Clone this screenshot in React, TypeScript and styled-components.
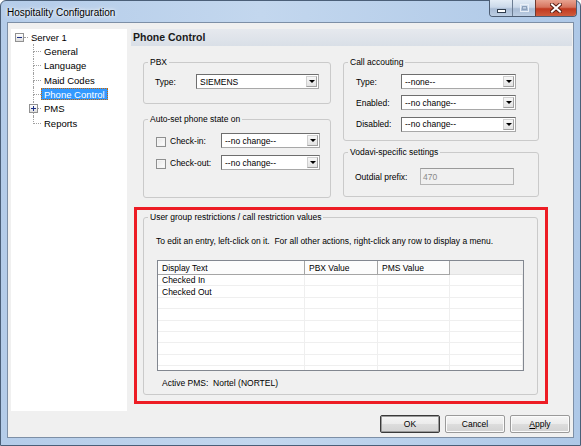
import { Fragment } from 'react';
import styled, { createGlobalStyle } from 'styled-components';

const GlobalStyle = createGlobalStyle`
  html, body {
    margin: 0;
    padding: 0;
    background: #fff;
  }
  body {
    font-family: "Liberation Sans", Arial, sans-serif;
    font-size: 8.5px;
    color: #000;
  }
`;

const Window = styled.div`
  width: 581px;
  height: 446px;
  box-sizing: border-box;
  display: flex;
  flex-direction: column;
  padding: 0 6px 7px 6px;
  border: 1px solid #4b5f78;
  border-radius: 6px 6px 0 0;
  background: linear-gradient(90deg, #b4cce9 0%, #c3d7ee 45%, #aec8e7 100%);
`;

const TitleBar = styled.div`
  height: 21px;
  display: flex;
  align-items: center;
  justify-content: space-between;
`;

const Title = styled.span`
  font-size: 10px;
  padding-top: 2px;
  text-shadow: 0 0 6px #fff, 0 0 3px #fff;
`;

const CaptionGroup = styled.div`
  align-self: flex-start;
  margin-top: -1px;
  margin-right: -3px;
  display: flex;
  height: 16px;
  border: 1px solid #4d5d73;
  border-top: none;
  border-radius: 0 0 4px 4px;
  overflow: hidden;
`;

const CaptionButton = styled.div<{ $close?: boolean; $width: number }>`
  width: ${(p) => p.$width}px;
  display: flex;
  align-items: center;
  justify-content: center;
  border-left: ${(p) => (p.$close ? '1px solid #6f3a30' : '1px solid #6c7d93')};
  background: ${(p) =>
    p.$close
      ? 'linear-gradient(180deg, #e8a390 0%, #d6745e 45%, #c13a20 55%, #cf5b3c 100%)'
      : 'linear-gradient(180deg, #e3ecf6 0%, #cbd9ea 45%, #a9bcd5 55%, #bccde2 100%)'};
  &:first-child {
    border-left: none;
  }
`;

const Client = styled.div`
  flex: 1;
  display: flex;
  flex-direction: column;
  gap: 4px;
  background: #f0f0f0;
  border: 1px solid #7d8fa6;
  padding: 6px 1px 4px 3px;
  min-height: 0;
`;

const Main = styled.div`
  flex: 1;
  display: flex;
  gap: 4px;
  min-height: 0;
`;

/* ---------- tree ---------- */

const Tree = styled.div`
  width: 116px;
  flex: none;
  background: #fff;
  padding-top: 1px;
  box-sizing: border-box;
  font-size: 9.5px;
`;

const TreeRow = styled.div<{ $indent: number }>`
  height: 14.33px;
  display: flex;
  align-items: stretch;
  padding-left: ${(p) => p.$indent}px;
`;

const Expander = styled.span<{ $over?: boolean }>`
  width: 9px;
  height: 9px;
  box-sizing: border-box;
  border: 1px solid #919191;
  background: linear-gradient(180deg, #fff, #dedede);
  display: flex;
  align-items: center;
  justify-content: center;
  align-self: center;
  flex: none;
  ${(p) =>
    p.$over &&
    `
    position: absolute;
    left: -4px;
    top: 50%;
    margin-top: -4.5px;
  `}
`;

const RootStub = styled.span`
  width: 4px;
  align-self: center;
  border-top: 1px dotted #a0a0a0;
`;

const Connector = styled.span`
  position: relative;
  width: 8px;
  flex: none;
  display: flex;
  flex-direction: column;
`;

const ConnectorHalf = styled.span<{ $line: boolean; $elbow?: boolean }>`
  flex: 1;
  border-left: ${(p) => (p.$line ? '1px dotted #a0a0a0' : '1px solid transparent')};
  border-bottom: ${(p) => (p.$elbow ? '1px dotted #a0a0a0' : 'none')};
`;

const TreeLabel = styled.span<{ $selected?: boolean }>`
  display: flex;
  align-items: center;
  align-self: center;
  height: 12px;
  padding: 0 2px;
  box-sizing: border-box;
  white-space: nowrap;
  border: 1px ${(p) => (p.$selected ? 'dotted #cc6600' : 'solid transparent')};
  color: ${(p) => (p.$selected ? '#fff' : '#000')};
  background: ${(p) => (p.$selected ? '#3399ff' : 'transparent')};
`;

const Minus = () => (
  <svg width="5" height="5" viewBox="0 0 5 5">
    <path d="M0 2.5h5" stroke="#1e3287" strokeWidth="1" />
  </svg>
);

const Plus = () => (
  <svg width="5" height="5" viewBox="0 0 5 5">
    <path d="M0 2.5h5M2.5 0v5" stroke="#1e3287" strokeWidth="1" />
  </svg>
);

const children = [
  { label: 'General' },
  { label: 'Language' },
  { label: 'Maid Codes' },
  { label: 'Phone Control', selected: true },
  { label: 'PMS', expandable: true },
  { label: 'Reports' },
];

/* ---------- right panel ---------- */

const Panel = styled.div`
  flex: 1;
  display: flex;
  flex-direction: column;
  min-width: 0;
`;

const PanelHeader = styled.div`
  height: 17px;
  line-height: 17px;
  padding-left: 2px;
  font-size: 10.5px;
  font-weight: bold;
  color: #1a1a1a;
  background: linear-gradient(180deg, #e6e9ee 0%, #d9dfe7 100%);
`;

const PanelBody = styled.div`
  padding-left: 3px;
  display: flex;
  flex-direction: column;
`;

const TopArea = styled.div`
  margin: 10.5px 0 0 9px;
  display: flex;
  gap: 12px;
`;

const Column = styled.div<{ $width: number; $gap: number }>`
  width: ${(p) => p.$width}px;
  display: flex;
  flex-direction: column;
  gap: ${(p) => p.$gap}px;
`;

const Group = styled.fieldset<{ $height: number }>`
  margin: 0;
  padding: 0;
  min-width: 0;
  height: ${(p) => p.$height}px;
  box-sizing: border-box;
  border: 1px solid #cacaca;
  border-radius: 3px;
`;

const Legend = styled.legend`
  margin-left: 4px;
  padding: 0 2px;
  line-height: 11px;
  font-size: 8.5px;
`;

const GroupBody = styled.div<{ $pad: string; $gap?: number }>`
  padding: ${(p) => p.$pad};
  display: flex;
  flex-direction: column;
  gap: ${(p) => p.$gap ?? 0}px;
`;

const FieldRow = styled.div<{ $height?: number }>`
  display: flex;
  align-items: center;
  height: ${(p) => p.$height ?? 15}px;
`;

const FieldLabel = styled.span<{ $width: number }>`
  width: ${(p) => p.$width}px;
  flex: none;
  white-space: nowrap;
`;

const CheckBox = styled.span`
  width: 10px;
  height: 10px;
  box-sizing: border-box;
  flex: none;
  margin: 2px 4px 0 0;
  border: 1px solid #8e8f8f;
  background: linear-gradient(135deg, #e6e6e6, #ffffff);
  box-shadow: inset 0 0 0 1px #f4f4f4;
`;

const ComboBox = styled.div<{ $width: number }>`
  width: ${(p) => p.$width}px;
  height: 15px;
  box-sizing: border-box;
  flex: none;
  display: flex;
  align-items: stretch;
  background: #fff;
  border: 1px solid #a8a8a8;
  border-top-color: #6e6e6e;
  border-left-color: #6e6e6e;
`;

const ComboText = styled.span`
  flex: 1;
  padding-left: 3px;
  display: flex;
  align-items: center;
  white-space: nowrap;
  overflow: hidden;
`;

const ComboButton = styled.span`
  width: 11px;
  margin: 1px;
  box-sizing: border-box;
  display: flex;
  align-items: center;
  justify-content: center;
  border: 1px solid #d0d0d0;
  border-right-color: #a0a0a0;
  border-bottom-color: #a0a0a0;
  background: linear-gradient(180deg, #f7f7f7, #e3e3e3);
`;

const TextField = styled.div<{ $width: number }>`
  width: ${(p) => p.$width}px;
  height: 17px;
  box-sizing: border-box;
  flex: none;
  padding-left: 2px;
  display: flex;
  align-items: center;
  color: #8a8a8a;
  background: #f0f0f0;
  border: 1px solid #b5b5b5;
  border-top-color: #9a9a9a;
`;

const Combo = ({ value, width }: { value: string; width: number }) => (
  <ComboBox $width={width}>
    <ComboText>{value}</ComboText>
    <ComboButton>
      <svg width="6" height="3" viewBox="0 0 6 3">
        <path d="M0 0h6L3 3z" fill="#000" />
      </svg>
    </ComboButton>
  </ComboBox>
);

const RedFrame = styled.div`
  margin-top: 9px;
  width: 414px;
  box-sizing: border-box;
  border: 3px solid #ed1c24;
  padding: 1.5px 7px 6px 6px;
`;

const Note = styled.div<{ $indent: number; $top: number }>`
  line-height: 11px;
  padding-left: ${(p) => p.$indent}px;
  margin-top: ${(p) => p.$top}px;
  white-space: nowrap;
`;

const ListView = styled.div`
  margin: 13.5px 0 0 13px;
  width: 367px;
  height: 111px;
  box-sizing: border-box;
  border: 1px solid #828790;
  background: #fff;
  overflow: hidden;
  display: grid;
  grid-template-columns: 147px 73px 72px 1fr;
  grid-template-rows: 14px;
  grid-auto-rows: 11.4px;
`;

const HeaderCell = styled.div<{ $filler?: boolean }>`
  box-sizing: border-box;
  padding-left: 4px;
  display: flex;
  align-items: center;
  white-space: nowrap;
  background: ${(p) => (p.$filler ? '#f0f0f0' : '#fcfcfc')};
  border-right: ${(p) => (p.$filler ? 'none' : '1px solid #a5a5a5')};
  border-bottom: 1px solid ${(p) => (p.$filler ? '#e2e2e2' : '#a5a5a5')};
`;

const Cell = styled.div`
  box-sizing: border-box;
  padding-left: 4px;
  display: flex;
  align-items: center;
  white-space: nowrap;
  border-right: 1px solid #efefef;
  border-bottom: 1px solid #efefef;
`;

const columns = ['Display Text', 'PBX Value', 'PMS Value'];
const rows = ['Checked In', 'Checked Out', '', '', '', '', '', '', ''];

/* ---------- buttons ---------- */

const ButtonBar = styled.div`
  height: 18px;
  display: flex;
  justify-content: flex-end;
  gap: 5px;
  padding-right: 2px;
`;

const Button = styled.div<{ $default?: boolean }>`
  width: 60px;
  height: 18px;
  box-sizing: border-box;
  display: flex;
  align-items: center;
  justify-content: center;
  border: 1px solid ${(p) => (p.$default ? '#3a3a3a' : '#9a9a9a')};
  border-radius: 2px;
  background: linear-gradient(180deg, #f6f6f6 0%, #ebebeb 50%, #dddddd 51%, #d2d2d2 100%);
  box-shadow: inset 0 0 0 1px ${(p) => (p.$default ? '#9a9a9a' : '#fbfbfb')};
`;

const App = () => (
  <>
    <GlobalStyle />
    <Window>
      <TitleBar>
        <Title>Hospitality Configuration</Title>
        <CaptionGroup>
          <CaptionButton $width={22}>
            <svg width="9" height="4" viewBox="0 0 9 4" style={{ marginTop: 5 }}>
              <rect x="0.5" y="0.5" width="8" height="3" fill="#fff" stroke="#2f3c4d" />
            </svg>
          </CaptionButton>
          <CaptionButton $width={22}>
            <svg width="9" height="8" viewBox="0 0 9 8">
              <rect x="0.5" y="0.5" width="8" height="7" fill="none" stroke="#e9eff7" />
              <rect x="2.5" y="2.5" width="4" height="3" fill="none" stroke="#8da1bb" />
            </svg>
          </CaptionButton>
          <CaptionButton $width={40} $close>
            <svg width="12" height="10" viewBox="0 0 12 10">
              <path d="M2 1.5L10 8.5M10 1.5L2 8.5" stroke="#5a1f14" strokeWidth="4" strokeLinecap="square" />
              <path d="M2 1.5L10 8.5M10 1.5L2 8.5" stroke="#fff" strokeWidth="2" strokeLinecap="square" />
            </svg>
          </CaptionButton>
        </CaptionGroup>
      </TitleBar>
      <Client>
        <Main>
          <Tree>
            <TreeRow $indent={4}>
              <Expander>
                <Minus />
              </Expander>
              <RootStub />
              <TreeLabel>Server 1</TreeLabel>
            </TreeRow>
            {children.map((c, i) => (
              <TreeRow key={c.label} $indent={22}>
                <Connector>
                  <ConnectorHalf $line $elbow />
                  <ConnectorHalf $line={i < children.length - 1} />
                  {c.expandable && (
                    <Expander $over>
                      <Plus />
                    </Expander>
                  )}
                </Connector>
                <TreeLabel $selected={c.selected}>{c.label}</TreeLabel>
              </TreeRow>
            ))}
          </Tree>
          <Panel>
            <PanelHeader>Phone Control</PanelHeader>
            <PanelBody>
              <TopArea>
                <Column $width={188} $gap={9.5}>
                  <Group $height={47.5}>
                    <Legend>PBX</Legend>
                    <GroupBody $pad="6.5px 12px 0 11px">
                      <FieldRow>
                        <FieldLabel $width={41}>Type:</FieldLabel>
                        <Combo value="SIEMENS" width={123} />
                      </FieldRow>
                    </GroupBody>
                  </Group>
                  <Group $height={84.5}>
                    <Legend>Auto-set phone state on</Legend>
                    <GroupBody $pad="8.5px 12px 0 12px" $gap={7}>
                      <FieldRow>
                        <CheckBox />
                        <FieldLabel $width={51}>Check-in:</FieldLabel>
                        <Combo value="--no change--" width={99} />
                      </FieldRow>
                      <FieldRow>
                        <CheckBox />
                        <FieldLabel $width={51}>Check-out:</FieldLabel>
                        <Combo value="--no change--" width={99} />
                      </FieldRow>
                    </GroupBody>
                  </Group>
                </Column>
                <Column $width={196} $gap={5.5}>
                  <Group $height={84.5}>
                    <Legend>Call accouting</Legend>
                    <GroupBody $pad="6.5px 12px 0 12px" $gap={6.3}>
                      <FieldRow>
                        <FieldLabel $width={45}>Type:</FieldLabel>
                        <Combo value="--none--" width={115} />
                      </FieldRow>
                      <FieldRow>
                        <FieldLabel $width={45}>Enabled:</FieldLabel>
                        <Combo value="--no change--" width={115} />
                      </FieldRow>
                      <FieldRow>
                        <FieldLabel $width={45}>Disabled:</FieldLabel>
                        <Combo value="--no change--" width={115} />
                      </FieldRow>
                    </GroupBody>
                  </Group>
                  <Group $height={50.5}>
                    <Legend>Vodavi-specific settings</Legend>
                    <GroupBody $pad="10.5px 12px 0 11px">
                      <FieldRow $height={17}>
                        <FieldLabel $width={65}>Outdial prefix:</FieldLabel>
                        <TextField $width={94}>470</TextField>
                      </FieldRow>
                    </GroupBody>
                  </Group>
                </Column>
              </TopArea>
              <RedFrame>
                <Group $height={183.5}>
                  <Legend>User group restrictions / call restriction values</Legend>
                  <Note $indent={12} $top={13}>
                    To edit an entry, left-click on it.&nbsp; For all other actions, right-click any row to display a menu.
                  </Note>
                  <ListView>
                    {columns.map((c) => (
                      <HeaderCell key={c}>{c}</HeaderCell>
                    ))}
                    <HeaderCell $filler />
                    {rows.map((r, i) => (
                      <Fragment key={i}>
                        <Cell>{r}</Cell>
                        <Cell />
                        <Cell />
                        <Cell />
                      </Fragment>
                    ))}
                  </ListView>
                  <Note $indent={18} $top={6.5}>
                    Active PMS:&nbsp; Nortel (NORTEL)
                  </Note>
                </Group>
              </RedFrame>
            </PanelBody>
          </Panel>
        </Main>
        <ButtonBar>
          <Button $default>OK</Button>
          <Button>Cancel</Button>
          <Button>
            <span>
              <u>A</u>pply
            </span>
          </Button>
        </ButtonBar>
      </Client>
    </Window>
  </>
);

export default App;
